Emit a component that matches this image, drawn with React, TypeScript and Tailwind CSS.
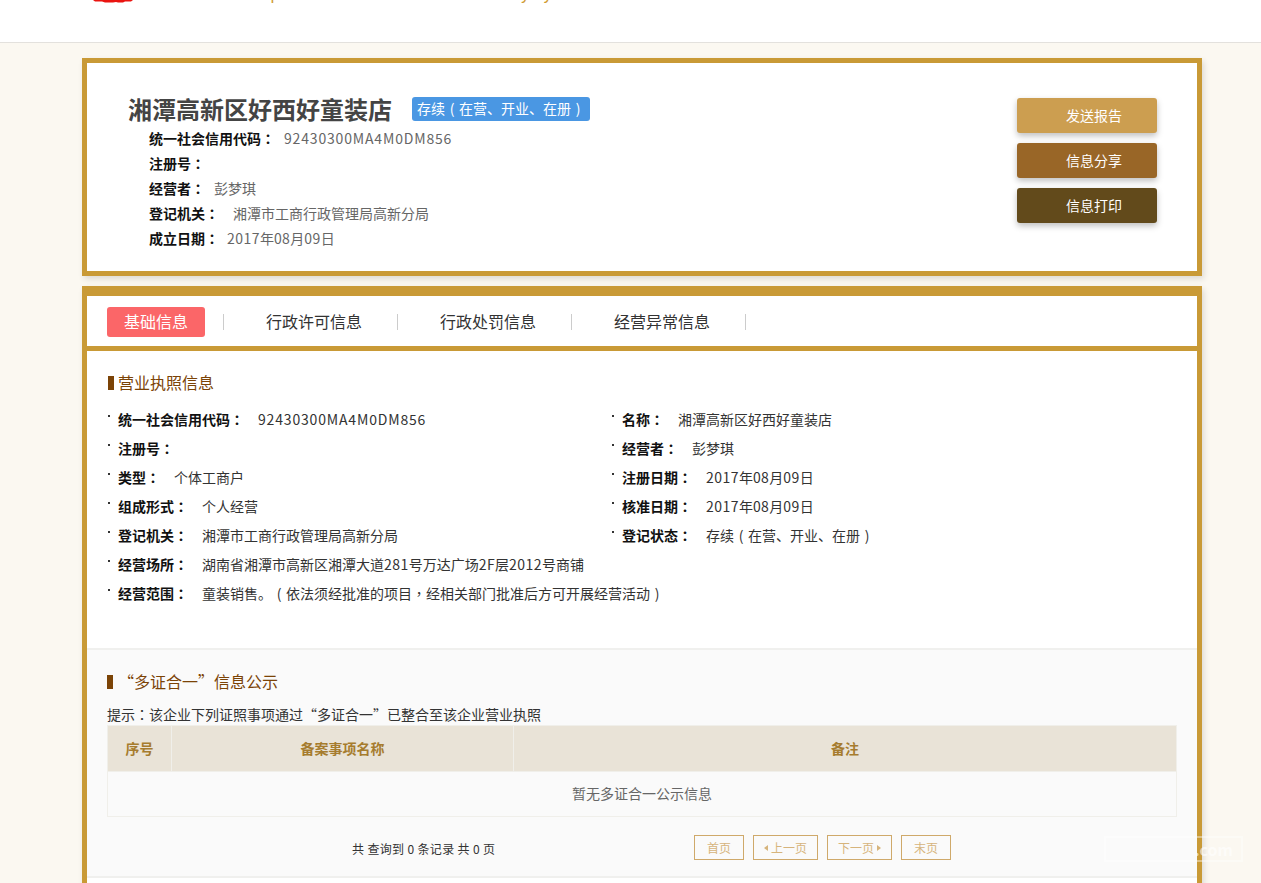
const sc = "font-['Noto_Sans_CJK_SC',sans-serif]";
const tc = "font-['Noto_Sans_CJK_TC',sans-serif]";

// the reference font sets centred punctuation and wider latin than Noto, so those runs get their own span
function T({ s }: { s: string }) {
  return (
    <>
      {s.split(/([：，]|[（）]|[0-9A-Z]+)/).map((p, i) => {
        if (p === "：" || p === "，") return <span key={i} className={tc}>{p}</span>;
        if (p === "（") return <span key={i} className="inline-block w-[1em] text-center">(</span>;
        if (p === "）") return <span key={i} className="inline-block w-[1em] text-center">)</span>;
        if (/^[0-9A-Z]+$/.test(p)) {
          return <span key={i} className={p.length > 10 ? "tracking-[0.83px]" : "tracking-[0.45px]"}>{p}</span>;
        }
        return p;
      })}
    </>
  );
}

function HeadRow({ label, value, gap }: { label: string; value?: string; gap: string }) {
  return (
    <div className="h-[25px] leading-[25px] text-[14px] whitespace-nowrap">
      <span className="font-bold text-[#111]"><T s={label} /></span>
      {value && <span className={`text-[#666] ${gap}`}><T s={value} /></span>}
    </div>
  );
}

function InfoItem({ label, value }: { label: string; value?: string }) {
  return (
    <div className="relative h-[29px] leading-[29px] pl-[11px] text-[14px] whitespace-nowrap text-[#333]">
      <span className="absolute left-[1px] top-[10px] w-[2px] h-[2px] bg-[#333]" />
      <span className="font-bold text-[#111]"><T s={label} /></span>
      {value && <span className="ml-[14px]"><T s={value} /></span>}
    </div>
  );
}

function PageBtn({ children, w }: { children: React.ReactNode; w: string }) {
  return (
    <div className={`${w} h-[25px] border border-[#cfa96a] text-[#d6b47c] text-[12px] flex items-center justify-center gap-[3px]`}>
      {children}
    </div>
  );
}

export default function App() {
  const tabs = ["行政许可信息", "行政处罚信息", "经营异常信息"];
  return (
    <div className={`${sc} relative h-[883px] overflow-hidden bg-[#fbf8f1]`}>
      <div className="relative h-[43px] bg-white border-b border-[#e3e1dd] overflow-hidden">
        <svg className="absolute left-[92px] top-0" width="42" height="3" viewBox="0 0 42 3">
          <path d="M1 0h40l-2 1.5h-6l-2 1h-5l-2-.6-3 .6h-8l-3-1H3z" fill="#ea1410" />
        </svg>
        <div className="absolute left-[158px] top-[-18px] text-[16px] leading-[20px] text-[#d09b34] tracking-[0.35px] whitespace-nowrap">
          National Enterprise Credit Information Publicity System
        </div>
      </div>

      <div className="w-[1120px] ml-[82px] mt-[15px]">
        <section className="h-[218px] border-[5px] border-[#c99a36] bg-white shadow-[2px_3px_6px_rgba(0,0,0,0.12)] flex justify-between pl-[41px] pr-[40px]">
          <div className="pt-[30px]">
            <div className="flex items-center h-[32px]">
              <h1 className="text-[24px] font-bold text-[#444] leading-[30px]">湘潭高新区好西好童装店</h1>
              <span className="ml-[20px] h-[24px] leading-[23px] px-[5px] rounded-[3px] bg-[#4a97e3] text-white text-[14px] whitespace-nowrap">
                <T s="存续（在营、开业、在册）" />
              </span>
            </div>
            <div className="pl-[21px] mt-[1px]">
              <HeadRow label="统一社会信用代码：" value="92430300MA4M0DM856" gap="ml-[9px]" />
              <HeadRow label="注册号：" gap="" />
              <HeadRow label="经营者：" value="彭梦琪" gap="ml-[9px]" />
              <HeadRow label="登记机关：" value="湘潭市工商行政管理局高新分局" gap="ml-[14px]" />
              <HeadRow label="成立日期：" value="2017年08月09日" gap="ml-[8px]" />
            </div>
          </div>
          <div className="pt-[35px] flex flex-col gap-[10px]">
            <button className="w-[140px] h-[35px] pl-[14px] rounded-[3px] bg-[#cc9e50] text-white text-[14px] shadow-[0_3px_6px_rgba(0,0,0,0.25)]">发送报告</button>
            <button className="w-[140px] h-[35px] pl-[14px] rounded-[3px] bg-[#996627] text-white text-[14px] shadow-[0_3px_6px_rgba(0,0,0,0.25)]">信息分享</button>
            <button className="w-[140px] h-[35px] pl-[14px] rounded-[3px] bg-[#624a1b] text-white text-[14px] shadow-[0_3px_6px_rgba(0,0,0,0.25)]">信息打印</button>
          </div>
        </section>

        <section className="mt-[10px] border-x-[5px] border-t-[10px] border-[#c99a36] bg-white shadow-[2px_3px_6px_rgba(0,0,0,0.12)]">
          <div className="h-[55px] border-b-[5px] border-[#c99a36] flex items-center pl-[20px] pt-[1px]">
            <div className="w-[98px] h-[30px] rounded-[3px] bg-[#fb6668] text-white text-[16px] leading-[28px] text-center">基础信息</div>
            <div className="w-px h-[16px] bg-[#ccc] ml-[18px]" />
            {tabs.map((t) => (
              <div key={t} className="flex items-center">
                <div className="w-[173px] pl-[7px] pb-[2px] text-center text-[16px] text-[#333]">{t}</div>
                <div className="w-px h-[16px] bg-[#ccc]" />
              </div>
            ))}
          </div>

          <div className="h-[299px] pt-[20px] pl-[20px] border-b-2 border-[#f0f0ee]">
            <div className="flex items-center h-[24px] text-[16px] text-[#7b4306]">
              <span className="ml-[1px] w-[6px] h-[14px] bg-[#7b4306] mr-[4px]" />
              <span className="mb-[2px]">营业执照信息</span>
            </div>
            <div className="mt-[10px] grid grid-cols-[504px_1fr]">
              <InfoItem label="统一社会信用代码：" value="92430300MA4M0DM856" />
              <InfoItem label="名称：" value="湘潭高新区好西好童装店" />
              <InfoItem label="注册号：" />
              <InfoItem label="经营者：" value="彭梦琪" />
              <InfoItem label="类型：" value="个体工商户" />
              <InfoItem label="注册日期：" value="2017年08月09日" />
              <InfoItem label="组成形式：" value="个人经营" />
              <InfoItem label="核准日期：" value="2017年08月09日" />
              <InfoItem label="登记机关：" value="湘潭市工商行政管理局高新分局" />
              <InfoItem label="登记状态：" value="存续（在营、开业、在册）" />
              <div className="col-span-2">
                <InfoItem label="经营场所：" value="湖南省湘潭市高新区湘潭大道281号万达广场2F层2012号商铺" />
              </div>
              <div className="col-span-2">
                <InfoItem label="经营范围：" value="童装销售。（依法须经批准的项目，经相关部门批准后方可开展经营活动）" />
              </div>
            </div>
          </div>

          <div className="h-[228px] bg-[#fafafa] px-[20px] pt-[20px] border-b-2 border-[#f0f0ee]">
            <div className="flex items-center h-[24px] text-[16px] text-[#7b4306]">
              <span className="w-[6px] h-[14px] bg-[#7b4306] mr-[5px]" />
              <span className="mb-[2px]">“多证合一”信息公示</span>
            </div>
            <div className="mt-[11px] h-[20px] leading-[18px] text-[14px] text-[#333]">
              <T s="提示：该企业下列证照事项通过“多证合一”已整合至该企业营业执照" />
            </div>
            <table className="w-[1070px] table-fixed border-collapse text-[14px]">
              <thead>
                <tr className="h-[46px] bg-[#e9e3d7] text-[#a67c2e]">
                  <th className="w-[64px] border border-[#f0efea] font-bold">序号</th>
                  <th className="w-[342px] border border-[#f0efea] font-bold">备案事项名称</th>
                  <th className="border border-[#f0efea] font-bold">备注</th>
                </tr>
              </thead>
              <tbody>
                <tr className="h-[45px]">
                  <td colSpan={3} className="border border-[#f0efea] pb-[2px] text-center text-[#666]">暂无多证合一公示信息</td>
                </tr>
              </tbody>
            </table>
            <div className="relative mt-[18px] flex items-center h-[25px]">
              <div className="ml-[245px] pt-[2px] text-[12px] text-[#333] tracking-[0.35px] whitespace-nowrap">共 查询到 0 条记录 共 0 页</div>
              <div className="absolute left-[587px] top-0 flex gap-[9px]">
                <PageBtn w="w-[50px]">首页</PageBtn>
                <PageBtn w="w-[65px]">
                  <span className="w-0 h-0 border-y-[3px] border-y-transparent border-r-[4px] border-r-[#d6b47c]" />
                  上一页
                </PageBtn>
                <PageBtn w="w-[65px]">
                  下一页
                  <span className="w-0 h-0 border-y-[3px] border-y-transparent border-l-[4px] border-l-[#d6b47c]" />
                </PageBtn>
                <PageBtn w="w-[50px]">末页</PageBtn>
              </div>
            </div>
          </div>
          <div className="h-[40px]" />
        </section>
      </div>

      {/* faint watermark lying over the page corner, only its tail is legible */}
      <div className="absolute left-[1104px] top-[836px] w-[139px] h-[26px] border-2 border-white/40 pr-[8px] text-right text-[16px] leading-[22px] font-bold text-white/60">
        .com
      </div>
    </div>
  );
}
